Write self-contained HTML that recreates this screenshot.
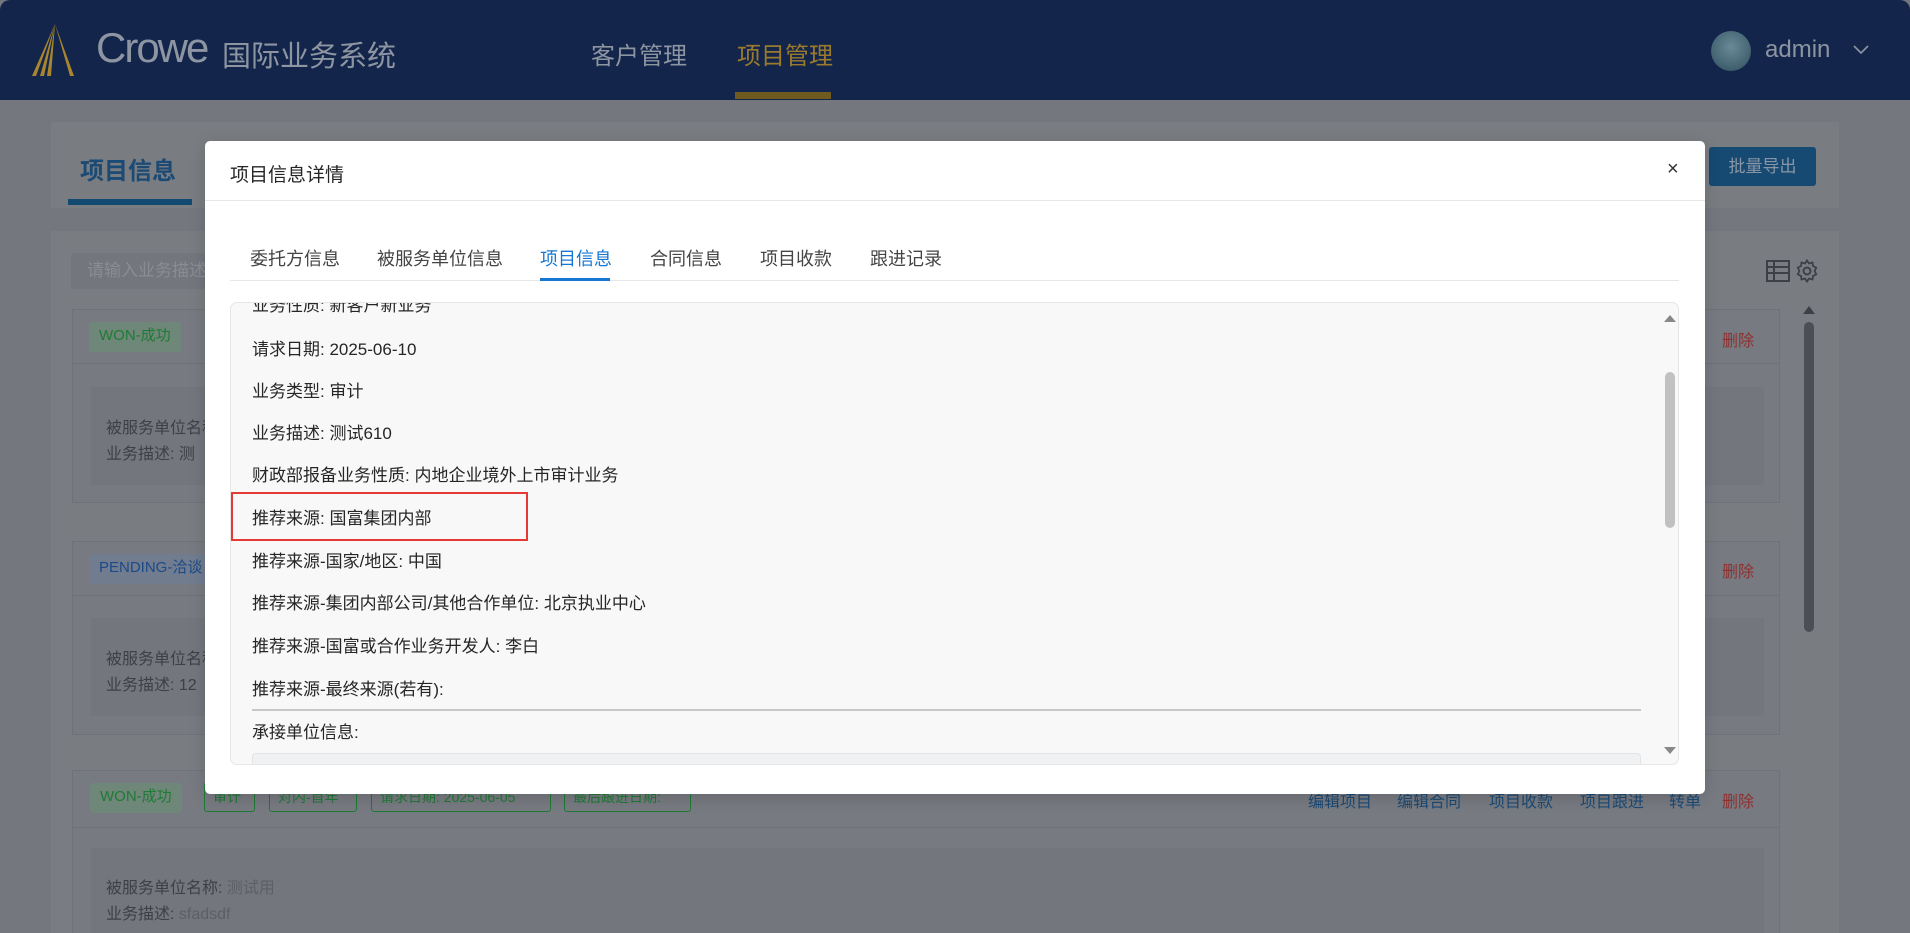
<!DOCTYPE html>
<html><head><meta charset="utf-8"><style>
*{margin:0;padding:0;box-sizing:border-box}
html,body{width:1910px;height:933px;overflow:hidden}
body{background:#74777e;font-family:"Liberation Sans","Noto Sans CJK SC",sans-serif;position:relative}
.a{position:absolute;white-space:nowrap}
.hdr{left:0;top:0;width:1910px;height:100px;background:#13254a;border-radius:10px 10px 0 0}
.lnk{color:#1b4a75;font-size:16px}
.tag{position:absolute;height:30px;line-height:28px;font-size:14px;padding:0 8px;border-radius:3px}
.row{position:absolute;left:21px;font-size:17px;color:#262626}
</style></head><body>
<div class="a hdr"></div>
<svg class="a" style="left:24px;top:24px" width="62" height="52" viewBox="0 0 62 52"><path d="M31 0 L8 52 L12 52 Z M31 0 L16 52 L20 52 Z M31 0 L23 52 L27 52 Z M31 0 L50 52 L46 52 Z" fill="#a8862f"/></svg>
<div class="a" style="left:96px;top:24px;font-size:42px;color:#8e95a2;letter-spacing:-2px">Crowe</div>
<div class="a" style="left:222px;top:33px;font-size:29px;color:#8e95a2">国际业务系统</div>
<div class="a" style="left:591px;top:36px;font-size:24px;color:#8e95a2">客户管理</div>
<div class="a" style="left:737px;top:36px;font-size:24px;color:#9a7b2e">项目管理</div>
<div class="a" style="left:735px;top:92px;width:96px;height:7px;background:#6f5b1f"></div>
<div class="a" style="left:1711px;top:31px;width:40px;height:40px;border-radius:50%;background:radial-gradient(circle at 50% 40%,#6a8a98,#2f4f5e)"></div>
<div class="a" style="left:1765px;top:36px;font-size:24px;color:#8e95a2">admin</div>
<svg class="a" style="left:1853px;top:45px" width="16" height="10"><path d="M1 1 L8 8 L15 1" stroke="#8e95a2" stroke-width="1.6" fill="none"/></svg>

<div class="a" style="left:51px;top:122px;width:1788px;height:86px;background:#797c81"></div>
<div class="a" style="left:80px;top:151px;font-size:24px;font-weight:bold;color:#1b4a75">项目信息</div>
<div class="a" style="left:68px;top:199px;width:124px;height:6px;background:#134a72"></div>
<div class="a" style="left:1709px;top:147px;width:107px;height:39px;background:#164a73;border-radius:3px;color:#8a96a6;font-size:17px;line-height:39px;text-align:center">批量导出</div>

<div class="a" style="left:51px;top:231px;width:1788px;height:702px;background:#797c81"></div>
<div class="a" style="left:71px;top:253px;width:300px;height:36px;background:#73767d;border-radius:3px;color:#8a8d93;font-size:17px;line-height:36px;padding-left:16px">请输入业务描述</div>
<svg class="a" style="left:1766px;top:260px" width="24" height="22"><rect x="1" y="1" width="22" height="20" fill="none" stroke="#3d4046" stroke-width="2"/><path d="M1 7H23M1 13H23M8 1V21" stroke="#3d4046" stroke-width="2"/></svg>
<svg class="a" style="left:1795px;top:258px" width="24" height="26" viewBox="0 0 24 24"><circle cx="12" cy="12" r="3.5" fill="none" stroke="#3d4046" stroke-width="2"/><path d="M12 1.5l2 3 3.5-1 .5 3.5 3.2 1.6-1.6 3.4 1.6 3.4-3.2 1.6-.5 3.5-3.5-1-2 3-2-3-3.5 1-.5-3.5-3.2-1.6 1.6-3.4-1.6-3.4 3.2-1.6.5-3.5 3.5 1z" fill="none" stroke="#3d4046" stroke-width="1.8"/></svg>
<div class="a" style="left:1803px;top:306px;width:0;height:0;border-left:6px solid transparent;border-right:6px solid transparent;border-bottom:8px solid #3d4046"></div>
<div class="a" style="left:1804px;top:322px;width:10px;height:310px;border-radius:5px;background:#4b4e54"></div>

<div class="a" style="left:72px;top:309px;width:1708px;height:194px;border:1px solid #6f7278;background:#777a80"></div>
<div class="a" style="left:73px;top:363px;width:1706px;height:1px;background:#6d7076"></div>
<div class="tag" style="left:89px;top:322px;background:#6e8778;color:#1f7a35;font-size:15px;padding:0 10px">WON-成功</div>
<div class="a lnk" style="left:1722px;top:327px;color:#8f3030">删除</div>
<div class="a" style="left:91px;top:387px;width:1673px;height:98px;background:#73767d"></div>
<div class="a" style="left:106px;top:414px;font-size:16px;color:#3d4046">被服务单位名称</div>
<div class="a" style="left:106px;top:440px;font-size:16px;color:#3d4046">业务描述: 测</div>

<div class="a" style="left:72px;top:541px;width:1708px;height:194px;border:1px solid #6f7278;background:#777a80"></div>
<div class="a" style="left:73px;top:595px;width:1706px;height:1px;background:#6d7076"></div>
<div class="tag" style="left:89px;top:554px;background:#717c8e;color:#1b4a8a;font-size:15px;padding:0 10px">PENDING-洽谈</div>
<div class="a lnk" style="left:1722px;top:558px;color:#8f3030">删除</div>
<div class="a" style="left:91px;top:618px;width:1673px;height:98px;background:#73767d"></div>
<div class="a" style="left:106px;top:645px;font-size:16px;color:#3d4046">被服务单位名称</div>
<div class="a" style="left:106px;top:671px;font-size:16px;color:#3d4046">业务描述: 12</div>

<div class="a" style="left:72px;top:770px;width:1708px;height:180px;border:1px solid #6f7278;background:#777a80"></div>
<div class="a" style="left:73px;top:827px;width:1706px;height:1px;background:#6d7076"></div>
<div class="tag" style="left:90px;top:783px;background:#6e8778;color:#1f7a35;font-size:15px;padding:0 10px">WON-成功</div>
<div class="tag" style="left:204px;top:782px;width:51px;border:1px solid #1f7a35;color:#1f7a35">审计</div>
<div class="tag" style="left:269px;top:782px;width:88px;border:1px solid #1f7a35;color:#1f7a35">对内-首年</div>
<div class="tag" style="left:371px;top:782px;width:180px;border:1px solid #1f7a35;color:#1f7a35">请求日期: 2025-06-05</div>
<div class="tag" style="left:564px;top:782px;width:127px;border:1px solid #1f7a35;color:#1f7a35">最后跟进日期:</div>
<div class="a lnk" style="left:1308px;top:788px">编辑项目</div>
<div class="a lnk" style="left:1397px;top:788px">编辑合同</div>
<div class="a lnk" style="left:1489px;top:788px">项目收款</div>
<div class="a lnk" style="left:1580px;top:788px">项目跟进</div>
<div class="a lnk" style="left:1669px;top:788px">转单</div>
<div class="a lnk" style="left:1722px;top:788px;color:#8f3030">删除</div>
<div class="a" style="left:91px;top:848px;width:1673px;height:90px;background:#73767d"></div>
<div class="a" style="left:106px;top:874px;font-size:16px;color:#3d4046">被服务单位名称: <span style="color:#5c5f65">测试用</span></div>
<div class="a" style="left:106px;top:900px;font-size:16px;color:#3d4046">业务描述: <span style="color:#5c5f65">sfadsdf</span></div>

<div class="a" style="left:205px;top:141px;width:1500px;height:653px;background:#fff;border-radius:5px;box-shadow:0 4px 16px rgba(0,0,0,.15)">
<div class="a" style="left:25px;top:19px;font-size:19px;color:#262626">项目信息详情</div>
<div class="a" style="left:1462px;top:17px;font-size:20px;color:#333">×</div>
<div class="a" style="left:0;top:59px;width:1500px;height:1px;background:#e8e8e8"></div>
<div class="a" style="left:25px;top:139px;width:1449px;height:1px;background:#e4e6ea"></div>
<div class="a" style="left:45px;top:104px;font-size:18px;color:#444">委托方信息</div>
<div class="a" style="left:172px;top:104px;font-size:18px;color:#444">被服务单位信息</div>
<div class="a" style="left:335px;top:104px;font-size:18px;color:#1677d2">项目信息</div>
<div class="a" style="left:445px;top:104px;font-size:18px;color:#444">合同信息</div>
<div class="a" style="left:555px;top:104px;font-size:18px;color:#444">项目收款</div>
<div class="a" style="left:665px;top:104px;font-size:18px;color:#444">跟进记录</div>
<div class="a" style="left:335px;top:137px;width:70px;height:3px;background:#1677d2"></div>
<div class="a" style="left:25px;top:161px;width:1449px;height:463px;background:#f8f8f8;border:1px solid #e6e6e6;border-radius:7px;overflow:hidden">
 <div class="row" style="top:-12px">业务性质: 新客户新业务</div>
 <div class="row" style="top:32px">请求日期: 2025-06-10</div>
 <div class="row" style="top:74px">业务类型: 审计</div>
 <div class="row" style="top:116px">业务描述: 测试610</div>
 <div class="row" style="top:158px">财政部报备业务性质: 内地企业境外上市审计业务</div>
 <div class="row" style="top:201px">推荐来源: 国富集团内部</div>
 <div class="row" style="top:244px">推荐来源-国家/地区: 中国</div>
 <div class="row" style="top:286px">推荐来源-集团内部公司/其他合作单位: 北京执业中心</div>
 <div class="row" style="top:329px">推荐来源-国富或合作业务开发人: 李白</div>
 <div class="row" style="top:372px">推荐来源-最终来源(若有):</div>
 <div class="a" style="left:21px;top:406px;width:1389px;height:2px;background:#c8c8c8"></div>
 <div class="row" style="top:415px">承接单位信息:</div>
 <div class="a" style="left:21px;top:450px;width:1389px;height:30px;background:#f0f1f3;border:1px solid #e2e3e6;border-radius:4px"></div>
 <div class="a" style="left:1433px;top:12px;width:0;height:0;border-left:6px solid transparent;border-right:6px solid transparent;border-bottom:7px solid #888"></div>
 <div class="a" style="left:1433px;top:444px;width:0;height:0;border-left:6px solid transparent;border-right:6px solid transparent;border-top:7px solid #888"></div>
 <div class="a" style="left:1434px;top:69px;width:10px;height:156px;border-radius:5px;background:#c1c1c1"></div>
</div>
<div class="a" style="left:26px;top:351px;width:297px;height:49px;border:2px solid #e53935"></div>
</div>
</body></html>
